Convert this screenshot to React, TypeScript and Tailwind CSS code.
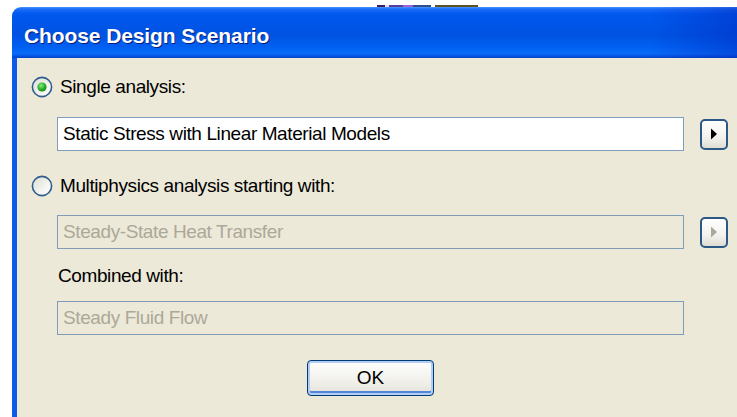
import React from "react";

const font = "font-['Liberation_Sans',Arial,sans-serif]";

// XP-style radio button, drawn as a small svg
const Radio: React.FC<{ checked?: boolean }> = ({ checked }) => (
    <svg width="22" height="22" viewBox="0 0 22 22" className="shrink-0">
        <defs>
            <linearGradient id={checked ? "rbA" : "rbB"} x1="0" y1="0" x2="1" y2="1">
                <stop offset="0" stopColor="#DCDBD3" />
                <stop offset="0.6" stopColor="#F4F4F0" />
                <stop offset="1" stopColor="#FFFFFF" />
            </linearGradient>
            <radialGradient id="rbDot" cx="0.4" cy="0.35" r="0.7">
                <stop offset="0" stopColor="#8CEB8C" />
                <stop offset="0.55" stopColor="#2DB32D" />
                <stop offset="1" stopColor="#148A14" />
            </radialGradient>
        </defs>
        <circle cx="11" cy="11" r="9.6" fill={`url(#${checked ? "rbA" : "rbB"})`} stroke="#2F5E8E" strokeWidth="1.6" />
        {checked && <circle cx="11" cy="11" r="4.6" fill="url(#rbDot)" />}
    </svg>
);

const ArrowButton: React.FC<{ disabled?: boolean }> = ({ disabled }) => (
    <div className="w-[28px] h-[31px] ml-[16px] shrink-0 flex items-center justify-center rounded-[5px] border-2 border-[#2C5886] bg-[linear-gradient(180deg,#FFFFFF_0%,#F3F2EE_60%,#DEDCD3_100%)]">
        <svg width="8" height="12" viewBox="0 0 8 12">
            <path d="M1 0.5 L7 6 L1 11.5 Z" fill={disabled ? "#ACA899" : "#000000"} />
        </svg>
    </div>
);

const Field: React.FC<{ text: string; disabled?: boolean }> = ({ text, disabled }) => (
    <div
        className={`w-[627px] h-[34px] shrink-0 flex items-center pl-[5px] border border-[#7F9DB9] text-[19px] tracking-[-0.4px] ${
            disabled ? "bg-[#ECE9D8] text-[#ACA899]" : "bg-white text-black"
        }`}
    >
        {text}
    </div>
);

export default function App() {
    return (
        <div className={`w-[737px] h-[417px] bg-white overflow-hidden flex flex-col ${font}`}>
            {/* bits of another window peeking above the dialog */}
            <div className="h-[7px] shrink-0 flex items-end pl-[377px]">
                <span className="w-[8px] h-[2px] bg-[#3A2060]" />
                <span className="w-[4px] h-[2px] bg-[#E8E0F0]" />
                <span className="w-[14px] h-[2px] bg-[#5A3C9A]" />
                <span className="w-[10px] h-[2px] bg-[#A060D8]" />
                <span className="w-[18px] h-[2px] bg-[#2C4E8A]" />
                <span className="w-[4px] h-[2px] bg-white" />
                <span className="w-[43px] h-[2px] bg-[#5C5222]" />
            </div>

            <div className="flex-1 ml-[12px] flex flex-col rounded-tl-[9px] overflow-hidden">
                <div className="h-[51px] shrink-0 flex items-center pl-[12px] pt-[6px] bg-[linear-gradient(90deg,rgba(0,0,0,0)_88%,rgba(0,40,190,0.45)_100%),linear-gradient(180deg,#4A95FF_0px,#1C6CF6_2px,#0058EE_7px,#0053E2_55%,#0060F2_78%,#0A6AF8_92%,#0041C8_100%)]">
                    <span className="text-white font-bold text-[21px] tracking-[-0.1px] [text-shadow:1px_1px_0_#0A1E78]">
                        Choose Design Scenario
                    </span>
                </div>

                <div className="flex-1 bg-[#ECE9D8] border-l-[5px] border-[#0B5AEA] flex flex-col text-black">
                    <div className="mt-[18px] ml-[14px] h-[22px] flex items-center gap-[7px] text-[19px] tracking-[-0.4px]">
                        <Radio checked />
                        <span>Single analysis:</span>
                    </div>

                    <div className="mt-[19px] ml-[40px] flex items-center">
                        <Field text="Static Stress with Linear Material Models" />
                        <ArrowButton />
                    </div>

                    <div className="mt-[24px] ml-[14px] h-[22px] flex items-center gap-[7px] text-[19px] tracking-[-0.4px]">
                        <Radio />
                        <span>Multiphysics analysis starting with:</span>
                    </div>

                    <div className="mt-[18px] ml-[40px] flex items-center">
                        <Field text="Steady-State Heat Transfer" disabled />
                        <ArrowButton disabled />
                    </div>

                    <div className="mt-[16px] ml-[41px] h-[22px] flex items-center text-[19px] tracking-[-0.4px]">
                        Combined with:
                    </div>

                    <div className="mt-[14px] ml-[40px] flex items-center">
                        <Field text="Steady Fluid Flow" disabled />
                    </div>

                    <div className="mt-[25px] ml-[290px]">
                        <button className="w-[127px] h-[36px] rounded-[4px] border border-[#003C74] bg-[linear-gradient(180deg,#FFFFFF_0%,#F2F1EC_55%,#E3E1D8_100%)] shadow-[inset_0_0_0_2px_#B4CDF6,inset_0_-2px_0_2px_#5585D8] text-[19px] text-black flex items-center justify-center">
                            OK
                        </button>
                    </div>
                </div>
            </div>
        </div>
    );
}
